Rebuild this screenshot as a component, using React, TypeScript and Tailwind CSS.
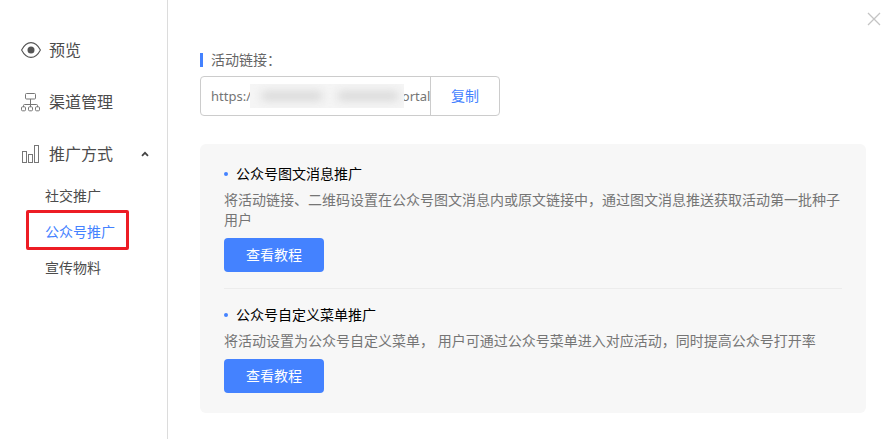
import { useState } from 'react';

const EyeIcon = () => (
  <svg className="w-5 h-5" viewBox="0 0 20 20" fill="none" stroke="#555" strokeWidth="1.1">
    <path d="M.6 10C3 5.300 6.300 2.600 10 2.600s7 2.700 9.400 7.400c-2.400 4.700-5.700 7.400-9.400 7.400S3 14.700.6 10z" />
    <circle cx="10" cy="10" r="3.500" fill="#555" stroke="none" />
  </svg>
);

const ChannelIcon = () => (
  <svg className="w-5 h-5" viewBox="0 0 20 20" fill="none" stroke="#777" strokeWidth="1">
    <rect x="4.500" y="1.500" width="10" height="5.500" rx="1" />
    <path d="M9.500 7v8M2.500 15v-1.500a1 1 0 0 1 1-1h12a1 1 0 0 1 1 1v1.500" />
    <rect x=".5" y="14.800" width="4" height="4" rx="1" />
    <rect x="7.500" y="14.800" width="4" height="4" rx="1" />
    <rect x="14.500" y="14.800" width="4" height="4" rx="1" />
  </svg>
);

const ChartIcon = () => (
  <svg className="w-5 h-5" viewBox="0 0 20 20" fill="none" stroke="#777" strokeWidth="1">
    <rect x="1.500" y="7.500" width="4" height="11" />
    <rect x="7.500" y="10.500" width="4" height="8" />
    <rect x="13.500" y="1.500" width="4" height="17" />
  </svg>
);

const menu = [
  { label: '预览', icon: EyeIcon },
  { label: '渠道管理', icon: ChannelIcon },
  { label: '推广方式', icon: ChartIcon, expandable: true },
];

const subMenu = ['社交推广', '公众号推广', '宣传物料'];

const guides = [
  {
    title: '公众号图文消息推广',
    text: '将活动链接、二维码设置在公众号图文消息内或原文链接中，通过图文消息推送获取活动第一批种子用户',
  },
  {
    title: '公众号自定义菜单推广',
    text: '将活动设置为公众号自定义菜单， 用户可通过公众号菜单进入对应活动，同时提高公众号打开率',
  },
];

const Sidebar = () => {
  const [open, setOpen] = useState(true);

  return (
    <nav className="w-42 shrink-0 border-r border-[#dcdcdc] pt-[30px] text-[#4c4c4c]">
      <ul className="flex flex-col gap-3">
        {menu.map(({ label, icon: Icon, expandable }) => (
          <li key={label}>
            <button
              type="button"
              onClick={() => expandable && setOpen(!open)}
              className="flex h-10 w-full items-center pl-[21px] pr-4 text-base cursor-pointer"
            >
              <Icon />
              <span className="ml-2">{label}</span>
              {expandable && (
                <svg className="ml-auto w-3 h-3" viewBox="0 0 12 12" fill="none" stroke="#444" strokeWidth="1.800">
                  <path d="M3 7.800l3-3 3 3" />
                </svg>
              )}
            </button>
          </li>
        ))}
      </ul>
      {open && (
        <ul className="mt-1 text-sm">
          {subMenu.map((label) => {
            const active = label === '公众号推广';
            return (
              <li key={label} className="relative">
                <a
                  href="#"
                  className={active ? 'flex h-9 items-center pl-[45px] text-[#4482ff]' : 'flex h-9 items-center pl-[45px]'}
                >
                  {label}
                </a>
                {active && (
                  <span className="absolute -top-1 bottom-0 left-[26px] w-[103px] rounded-xs border-3 border-[#ed1c24] pointer-events-none" />
                )}
              </li>
            );
          })}
        </ul>
      )}
    </nav>
  );
};

const LinkField = () => (
  <div>
    <label htmlFor="activity-link" className="flex items-center gap-2 text-sm leading-5 text-[#666]">
      <span className="h-3.5 w-[3px] bg-[#4482ff]" />
      活动链接：
    </label>
    <div className="mt-1.5 flex h-10 w-[300px] max-w-full rounded border border-[#ccc]">
      <div className="relative min-w-0 flex-1">
        <input
          id="activity-link"
          readOnly
          defaultValue="https:/·········································portal"
          className="h-full w-full pl-2.5 text-[13px] text-[#757575] outline-none"
        />
        <span className="absolute left-[49px] top-[7px] flex h-6 w-[154px] items-center overflow-hidden bg-[#f5f5f5]">
          <span className="ml-3 h-2 w-15 bg-[#d4d4d4] blur-[5px]" />
          <span className="ml-4 h-2 w-15 bg-[#d4d4d4] blur-[5px]" />
        </span>
      </div>
      <button type="button" className="w-[69px] border-l border-[#ccc] text-sm text-[#4482ff] cursor-pointer">
        复制
      </button>
    </div>
  </div>
);

const App = () => {
  return (
    <div className="flex min-h-screen bg-white font-['Noto_Sans','Noto_Sans_CJK_SC',sans-serif]">
      <Sidebar />
      <main className="relative min-w-0 flex-1 pt-[50px] pb-6 pl-8 pr-[19px]">
        <button type="button" aria-label="关闭" className="absolute right-1 top-3 cursor-pointer">
          <svg className="w-3.5 h-3.5" viewBox="0 0 14 14" fill="none" stroke="#c4c4c4" strokeWidth="1.300">
            <path d="M1 1l12 12M13 1L1 13" />
          </svg>
        </button>
        <LinkField />
        <div className="mt-7 rounded-md bg-[#f7f7f7] px-6 py-5 text-sm leading-5 divide-y divide-[#ececec]">
          {guides.map(({ title, text }) => (
            <section key={title} className="pb-4 last:pb-0 last:pt-4">
              <h3 className="flex items-center gap-2 text-black">
                <span className="w-1 h-1 rounded-full bg-[#4482ff]" />
                {title}
              </h3>
              <p className="mt-1.5 text-[#757575]">{text}</p>
              <button type="button" className="mt-2 h-[34px] w-25 rounded bg-[#4482ff] text-white cursor-pointer">
                查看教程
              </button>
            </section>
          ))}
        </div>
      </main>
    </div>
  );
};

export default App;
